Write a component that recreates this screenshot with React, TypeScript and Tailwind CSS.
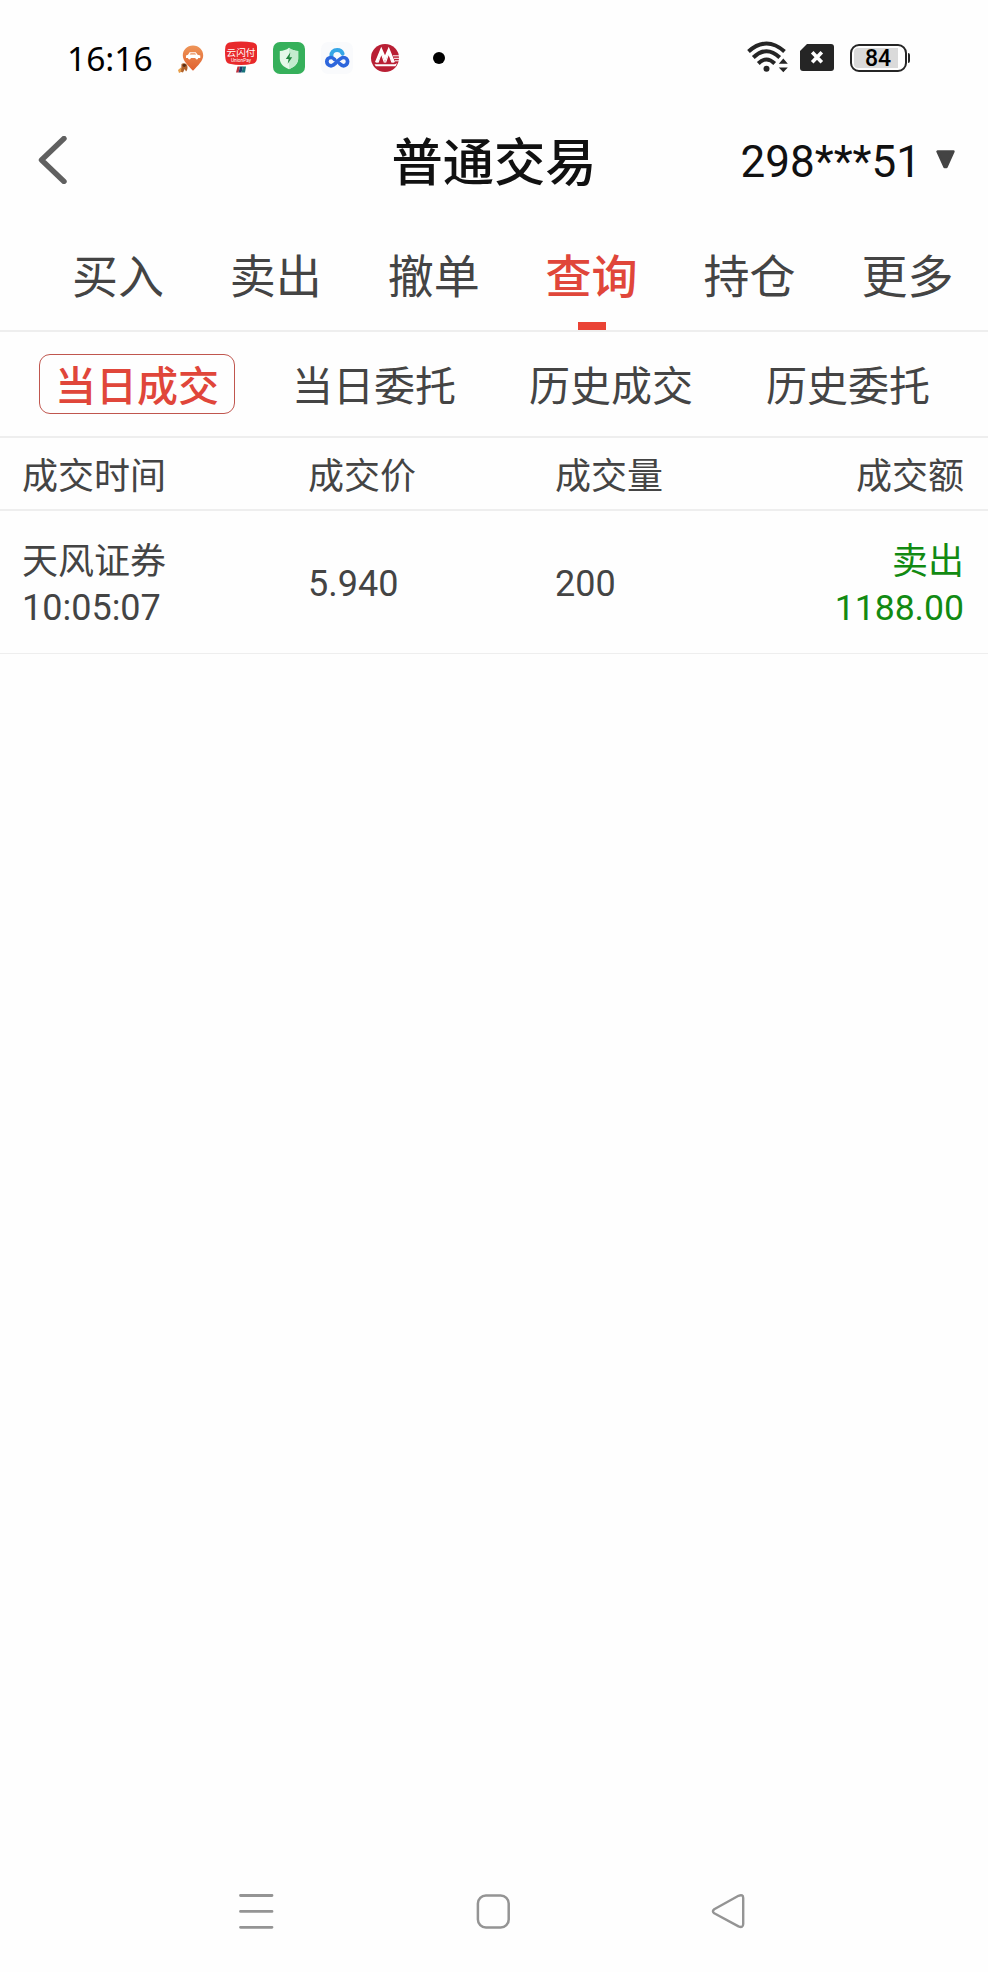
import clsx from "clsx"

const tabs = ["买入", "卖出", "撤单", "查询", "持仓", "更多"]
const queries = ["当日成交", "当日委托", "历史成交", "历史委托"]

const trades = [
  { name: "天风证券", time: "10:05:07", price: "5.940", volume: "200", side: "卖出", amount: "1188.00" },
]

const CarPinIcon = () => (
  <svg width="32" height="32" viewBox="0 0 32 32">
    <defs>
      <linearGradient id="pin" x1="0" y1="0" x2="0" y2="1">
        <stop offset="0" stopColor="#ee9558" />
        <stop offset="1" stopColor="#e0602f" />
      </linearGradient>
    </defs>
    <path d="M17 3.5C23 3.5 27.2 8 27.2 13.4C27.2 19 21.6 23.5 17 28.7C12.4 23.5 6.8 19 6.8 13.4C6.8 8 11 3.5 17 3.5Z" fill="url(#pin)" />
    <path d="M10 16V13.6L12 12.7L13.6 10.2H19.8L21.6 12.7L24.3 13.6V16Z" fill="#fff" />
    <path d="M13.7 12.6L14.6 11.3H19.2L20.1 12.6Z" fill="#ea8a54" />
    <circle cx="13.4" cy="16" r="1.4" fill="#fff" />
    <circle cx="20.8" cy="16" r="1.4" fill="#fff" />
    <path d="M5.5 22C7 20.7 10.5 21 11.2 23.5C12 26 11.3 28.5 10 29.5L8.7 27L7 30.5L4.5 29.8L3.8 31L3.2 28L5.3 26.5Z" fill="#b0622c" />
    <path d="M2 28L5 25.5L5.3 29.5L3 31Z" fill="#e9a04a" />
    <circle cx="8.3" cy="23.3" r="1.6" fill="#5a3018" />
  </svg>
)

const UnionPayIcon = () => (
  <svg width="34" height="34" viewBox="0 0 34 34">
    <path d="M5 1.5Q17 -0.5 29 1.5Q33 2.5 33 6V16C33 20 32 22 28.5 22.7Q17 25.3 5.5 22.7Q2 22 1.5 18Q0.5 11 1.5 5Q2.5 2 5 1.5Z" fill="#e8292b" />
    <text x="17" y="15" textAnchor="middle" fontSize="9.6" fontFamily="Noto Sans CJK SC, sans-serif" fill="#fff">云闪付</text>
    <text x="17" y="20.5" textAnchor="middle" fontSize="4.8" fontFamily="Roboto, sans-serif" fill="#fff">UnionPay</text>
    <path d="M13.5 25.5H16L14.5 31.5H12Z" fill="#c0303c" />
    <path d="M16 25.5H19L17.5 31.5H14.5Z" fill="#1c3a6b" />
    <path d="M19 25.5H22L21 31.5H17.5Z" fill="#16737b" />
  </svg>
)

const ShieldIcon = () => (
  <svg width="32" height="32" viewBox="0 0 32 32">
    <rect width="32" height="32" rx="7" fill="#36b05b" />
    <path d="M16 5.8C18.5 8 21.8 8.8 25.2 9V16.5C25.2 21.5 21.5 25 16 27.2C10.5 25 6.8 21.5 6.8 16.5V9C10.2 8.8 13.5 8 16 5.8Z" fill="#e5f8e9" />
    <path d="M16 5.8C18.5 8 21.8 8.8 25.2 9V16.5C25.2 21.5 21.5 25 16 27.2Z" fill="#c3ebce" />
    <path d="M17.3 10.5L12.8 17H15.6L14.7 21.8L19.2 15.2H16.5Z" fill="#20863f" />
  </svg>
)

const CloudIcon = () => (
  <svg width="32" height="32" viewBox="0 0 32 32" fill="none" strokeWidth="3.7" strokeLinecap="round">
    <rect width="32" height="32" rx="7" fill="#f9fafc" />
    <path d="M10.4 14C10 10.4 12.6 8 16.2 8C18.8 8 20.8 9.4 21.6 11.6" stroke="#36a6e6" strokeWidth="4" />
    <path d="M13.6 17.4C12.5 16.2 11.4 15.5 10 15.5C7.6 15.5 5.8 17.3 5.8 19.6C5.8 21.9 7.6 23.8 10 23.8C14.6 23.8 17.6 15.5 22.5 15.5C24.9 15.5 26.6 17.3 26.6 19.6C26.6 21.9 24.9 23.8 22.6 23.8C21.1 23.8 20 23 18.8 21.8" stroke="#2d66dc" />
  </svg>
)

const BankIcon = () => (
  <svg width="28" height="28" viewBox="0 0 28 28">
    <circle cx="14" cy="14" r="14" fill="#b91f34" />
    <path d="M5.2 18.5L10.3 6L14 14.5L17.7 6L22.8 18.5" fill="none" stroke="#fff" strokeWidth="2.6" />
    <path d="M7 18.5L10.3 9.5L13.5 18.5M14.5 18.5L17.7 9.5L21 18.5" fill="none" stroke="#fff" strokeWidth="1.2" />
    <path d="M3.5 20.2H22.5C24 20.2 25.2 19.7 26 19.2L24.5 22.3H4.8Z" fill="#fff" />
    <path d="M22 11.8H28M23 14.3H28M24 16.8H28" stroke="#fff" strokeWidth="1" />
  </svg>
)

const WifiIcon = () => (
  <svg width="42" height="32" viewBox="0 0 42 32" fill="none" stroke="#252525" strokeWidth="4">
    <path d="M1.5 10.5Q19.5 -5.5 37.5 10.5" />
    <path d="M6.3 16.5Q19.5 4 32.7 16.5" />
    <path d="M11.3 22.5Q19.5 14.5 27.7 22.5" />
    <circle cx="19.5" cy="27.8" r="3" fill="#252525" stroke="none" />
    <path d="M36.3 17.5L40.8 22.7H31.8ZM36.3 31.2L40.8 26.5H31.8Z" fill="#252525" stroke="none" />
  </svg>
)

const SimIcon = () => (
  <svg width="34" height="27" viewBox="0 0 34 27">
    <path d="M7 0H31Q34 0 34 3V24Q34 27 31 27H3Q0 27 0 24V7Z" fill="#252525" />
    <path d="M12.2 8.3L21.8 18.3M21.8 8.3L12.2 18.3" stroke="#fff" strokeWidth="3.6" />
  </svg>
)

const StatusBar = () => (
  <header className="flex h-[116px] items-center pl-[67px] pr-[78px]">
    <span className="w-[109px] pt-px font-['Noto_Sans'] text-[33.5px] leading-none text-black">16:16</span>
    <div className="flex items-center">
      <CarPinIcon />
      <div className="ml-4">
        <UnionPayIcon />
      </div>
      <div className="ml-[15px]">
        <ShieldIcon />
      </div>
      <div className="ml-4">
        <CloudIcon />
      </div>
      <div className="ml-[18px]">
        <BankIcon />
      </div>
      <span className="ml-[34px] size-3 rounded-full bg-black" />
    </div>

    <div className="ml-auto flex items-center">
      <div className="-mt-0.5">
        <WifiIcon />
      </div>
      <div className="-mt-0.5 ml-[11px]">
        <SimIcon />
      </div>
      <div className="ml-4 flex h-7 w-[57px] items-center rounded-[9px] border-2 border-[#252525] p-0.5">
        <div className="flex h-5 w-11 items-center justify-center rounded-l-[4px] bg-[#dadada] pl-1 font-['Roboto'] text-[23px] font-medium leading-none text-black">
          84
        </div>
      </div>
      <span className="ml-px h-[10px] w-0.5 rounded-r bg-[#252525]" />
    </div>
  </header>
)

const TitleBar = () => (
  <div className="grid h-[91px] grid-cols-3 items-center pb-[3px]">
    <svg className="ml-[38px]" width="30" height="48" viewBox="0 0 30 48" fill="none">
      <path d="M26 2.5L3.5 24L26 45.5" stroke="#606060" strokeWidth="5.4" strokeLinecap="round" strokeLinejoin="round" />
    </svg>
    <h1 className="pb-[3px] text-center text-[51.3px] font-medium leading-none text-[#111]">普通交易</h1>
    <div className="flex items-center justify-end pr-[33px]">
      <span className="pt-1 font-['Roboto'] text-[44px] leading-none text-[#111]">298***51</span>
      <svg className="-mt-0.5 ml-[15px]" width="19" height="19" viewBox="0 0 19 19">
        <path d="M1.5 1.5H17.5L10.5 17H8.5Z" fill="#444" stroke="#444" strokeWidth="2.4" strokeLinejoin="round" />
      </svg>
    </div>
  </div>
)

const Tabs = () => (
  <nav className="flex h-[125px] border-b-2 border-[#eee] pl-[39px]">
    {tabs.map((tab) => (
      <button
        key={tab}
        className={clsx(
          "flex w-[157.9px] shrink-0 flex-col items-center justify-between pt-[43px] text-[46px] leading-none",
          tab === "查询" ? "font-medium text-[#e0463a]" : "text-[#444]"
        )}
      >
        {tab}
        {tab === "查询" && <span className="h-2 w-7 bg-[#ea4335]" />}
      </button>
    ))}
  </nav>
)

const QueryTabs = () => (
  <div className="flex h-[106px] items-center border-b-2 border-[#eee] pl-[39px]">
    {queries.map((query, i) => (
      <button
        key={query}
        className={clsx(
          "mr-[41px] h-[60px] w-[196px] shrink-0 whitespace-nowrap pb-0.5 text-[41px] leading-none",
          i === 0
            ? "rounded-[11px] border border-[#c0564e] font-medium text-[#e0463a]"
            : "text-[#444]"
        )}
      >
        {query}
      </button>
    ))}
  </div>
)

const columns = "grid grid-cols-[286px_247px_1fr] pl-[22px] pr-6"

const TradeTable = () => (
  <section className="text-4xl text-[#444]">
    <div className={clsx(columns, "h-[73px] items-center border-b-2 border-[#eee] pb-px leading-none")}>
      <span>成交时间</span>
      <span>成交价</span>
      <div className="flex justify-between">
        <span>成交量</span>
        <span>成交额</span>
      </div>
    </div>
    {trades.map((trade) => (
      <div key={trade.time} className={clsx(columns, "h-[143px] items-center border-b border-[#eee] leading-12")}>
        <div>
          <p>{trade.name}</p>
          <p className="-mb-0.5 pt-0.5 font-['Roboto']">{trade.time}</p>
        </div>
        <span className="pt-1 font-['Roboto']">{trade.price}</span>
        <div className="flex items-center justify-between">
          <span className="pt-1 font-['Roboto']">{trade.volume}</span>
          <div className="text-right text-[#128a12]">
            <p>{trade.side}</p>
            <p className="-mb-0.5 pt-0.5 font-['Roboto'] text-[35.6px]">{trade.amount}</p>
          </div>
        </div>
      </div>
    ))}
  </section>
)

const SystemNav = () => (
  <footer className="mt-auto flex h-[79px] pl-[238px]">
    <svg width="36" height="38" viewBox="0 0 36 38">
      <path d="M2.5 2.5H34M2.5 18.4H34M2.5 34.3H34" stroke="#949494" strokeWidth="2.8" strokeLinecap="round" />
    </svg>
    <svg className="ml-[201px]" width="36" height="38" viewBox="0 0 36 38" fill="none">
      <rect x="2.9" y="2.5" width="30.8" height="32" rx="8" stroke="#949494" strokeWidth="2.5" />
    </svg>
    <svg className="ml-[199px]" width="36" height="38" viewBox="0 0 36 38" fill="none">
      <path d="M28.5 2.8Q33.2 1 33.2 5V31Q33.2 35.2 28.5 33.4L4.2 20.3Q1.6 18.3 4.2 16.2Z" stroke="#949494" strokeWidth="2.4" strokeLinejoin="round" />
    </svg>
  </footer>
)

const App = () => {
  return (
    <main className="flex h-[1972px] w-[988px] flex-col overflow-hidden bg-[#fefefe] font-['Noto_Sans_CJK_SC',sans-serif]">
      <StatusBar />
      <TitleBar />
      <Tabs />
      <QueryTabs />
      <TradeTable />
      <SystemNav />
    </main>
  )
}

export default App
